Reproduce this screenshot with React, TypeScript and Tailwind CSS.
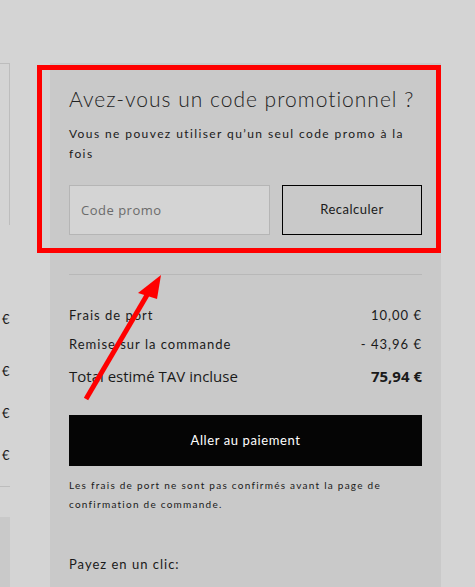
const jost = { fontFamily: 'Lato, "Open Sans", sans-serif' };

const SummaryRow = ({ label, value }: { label: string; value: string }) => (
  <div className="flex items-center justify-between text-[13px] leading-5 tracking-[1px] text-[#1a1a1a]">
    <span>{label}</span>
    <span>{value}</span>
  </div>
);

export default function App() {
  return (
    <div
      className="relative flex h-[587px] w-[475px] overflow-hidden bg-[#d4d4d4] text-[#1a1a1a]"
      style={jost}
    >
      {/* left column, cut off by the viewport */}
      <div className="flex w-[10px] shrink-0 flex-col pt-[63px]">
        <div className="h-[162px] border-t border-r border-[#bdbdbd]" />
        <div className="flex flex-col pl-[2px] pt-[84px] text-[13px] leading-5">
          <span>€</span>
          <span className="mt-[32px]">€</span>
          <span className="mt-[22px]">€</span>
          <span className="mt-[22px]">€</span>
        </div>
        <div className="mt-[21px] h-px bg-[#bdbdbd]" />
        <div className="mt-[30px] flex-1 bg-[#c9c9c9]" />
      </div>

      {/* order summary panel */}
      <div className="ml-[40px] mt-[63px] w-[391px] shrink-0 bg-[#c9c9c9] px-[19px] pt-[22px]">
        <h2 className="text-[21px] font-light leading-7 tracking-[1px] text-[#222]">
          Avez-vous un code promotionnel ?
        </h2>
        <p className="mt-[11px] text-[12px] leading-5 tracking-[1.4px] text-[#1a1a1a]">
          Vous ne pouvez utiliser qu’un seul code promo à la fois
        </p>

        <div className="mt-[21px] flex gap-[12px]">
          <input
            placeholder="Code promo"
            className="h-[50px] w-[201px] border border-[#b5b5b5] bg-[#d4d4d4] px-[11px] text-[13px] tracking-[0.5px] text-[#333] outline-none placeholder:text-[#6b6b6b]"
            style={{ fontFamily: '"Open Sans", sans-serif' }}
          />
          <button className="h-[50px] flex-1 border border-black text-[13px] tracking-[0.5px] text-[#1a1a1a]">
            Recalculer
          </button>
        </div>

        <div className="mt-[39px] h-px bg-[#b8b8b8]" />

        <div className="mt-[30px] flex flex-col gap-[9px]">
          <SummaryRow label="Frais de port" value="10,00 €" />
          <SummaryRow label="Remise sur la commande" value="- 43,96 €" />
        </div>
        <div
          className="mt-[10px] flex items-center justify-between text-[15px] leading-6 text-[#1a1a1a]"
          style={{ fontFamily: '"Open Sans", sans-serif' }}
        >
          <span>Total estimé TAV incluse</span>
          <span className="font-bold">75,94 €</span>
        </div>

        <button className="mt-[27px] flex h-[51px] w-full items-center justify-center bg-[#050505] text-[13px] tracking-[0.6px] text-white">
          Aller au paiement
        </button>

        <p className="mt-[10px] text-[10px] leading-[19px] tracking-[1.25px] text-[#1a1a1a]">
          Les frais de port ne sont pas confirmés avant la page de confirmation de commande.
        </p>

        <p className="mt-[40px] text-[13px] leading-5 tracking-[1px] text-[#1a1a1a]">Payez en un clic:</p>
      </div>

      {/* annotation: red frame */}
      <div className="pointer-events-none absolute left-[37px] top-[65px] h-[188px] w-[404px] border-[5px] border-[#ff0000]" />

      {/* annotation: red arrow */}
      <svg className="pointer-events-none absolute left-0 top-0" width="475" height="587">
        <line x1="86" y1="399" x2="150" y2="290" stroke="#ff0000" strokeWidth="5" />
        <polygon points="161,275 138,293 157,299" fill="#ff0000" />
      </svg>
    </div>
  );
}
